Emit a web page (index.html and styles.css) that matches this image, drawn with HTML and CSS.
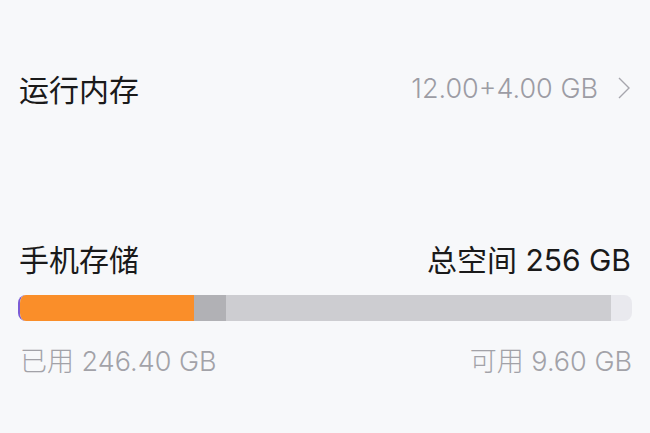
FILE: index.html
```html
<html lang="zh-CN">
<head>
    <meta charset="UTF-8">
    <meta name="viewport" content="width=device-width, initial-scale=1.0">
    <title>内存与存储</title>

    <link rel="stylesheet" href="styles.css">
</head>
<body>

    <main class="panel">
        <div class="row memory">
          <span class="label">运行内存</span>
          <span class="value">
            12.00+4.00 GB
            <svg class="chevron" width="12" height="22" viewBox="0 0 12 22">
              <polyline points="1,1 11,11 1,21" fill="none" stroke="#a6a6ad" stroke-width="1.4"/>
            </svg>
          </span>
        </div>

        <section class="storage">
          <div class="row">
            <span class="label">手机存储</span>
            <span class="total">总空间 256 GB</span>
          </div>

          <!-- 已用 / 系统 / 其他 / 剩余 -->
          <div class="bar">
            <span class="seg apps" style="width: 28.5%"></span>
            <span class="seg system" style="width: 5.1%"></span>
            <span class="seg other" style="width: 62.9%"></span>
            <span class="seg free"></span>
          </div>

          <div class="row foot">
            <span>已用 246.40 GB</span>
            <span>可用 9.60 GB</span>
          </div>
        </section>
    </main>

</body>
</html>
```

FILE: styles.css
```css
html,
body {
  margin: 0;
  height: 100%;
  background-color: #f7f8fa;
}

body {
  font-family: Inter, "Noto Sans CJK SC", sans-serif;
  color: #1a1a1a;
}

.panel {
  padding: 68px 18px 0 18px;
}

.row {
  display: flex;
  justify-content: space-between;
  align-items: center;
  height: 40px;
}

.label {
  font-size: 30px;
  font-weight: 400;
  padding-left: 1px;
}

.value {
  display: flex;
  align-items: center;
  gap: 20px;
  font-size: 27px;
  font-weight: 300;
  color: #9c9ca4;
  padding-right: 2px;
}

.chevron {
  display: block;
}

.storage {
  margin-top: 130px;
}

.total {
  font-size: 30px;
  font-weight: 400;
  padding-right: 1px;
}

.bar {
  display: flex;
  height: 26px;
  margin-top: 17px;
  border-radius: 8px;
  overflow: hidden;
  border-left: 2px solid #7b5cd6;
}

.seg {
  height: 100%;
}

.apps {
  background: #fa8e29;
}

.system {
  background: #b1b1b5;
}

.other {
  background: #cdcdd1;
}

.free {
  flex: 1;
  background: #e9e9ee;
}

.foot {
  margin-top: 23px;
  padding-left: 2px;
  height: 30px;
  font-size: 27px;
  font-weight: 300;
  color: #a2a2a8;
}
```
